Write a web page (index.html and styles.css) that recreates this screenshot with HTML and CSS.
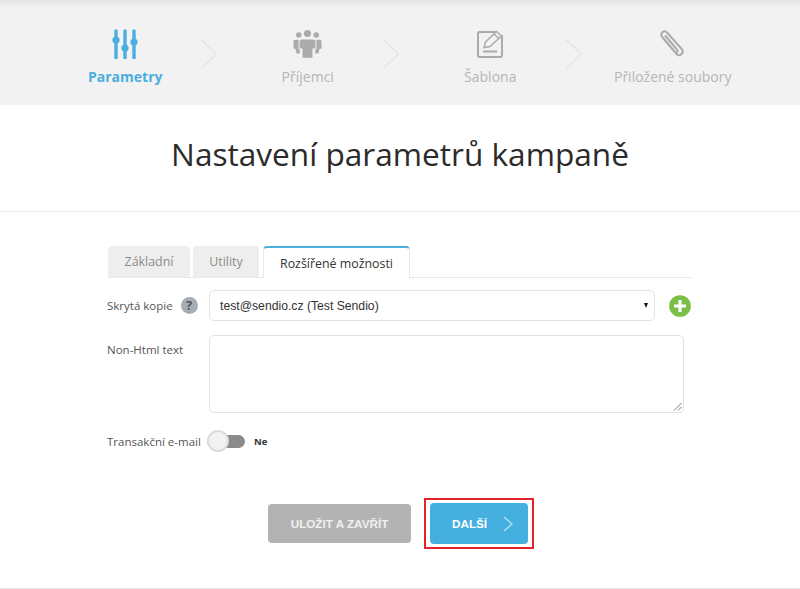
FILE: index.html
```html
<!DOCTYPE html>
<html lang="cs">
<head>
<meta charset="utf-8">
<title>Nastavení parametrů kampaně</title>
<link rel="stylesheet" href="styles.css">
</head>
<body>
<header class="steps">
  <div class="step active">
    <svg class="icon" viewBox="0 0 26 30" width="26" height="30"><g fill="none" stroke="#4aaee0" stroke-width="3.4" stroke-linecap="round"><path d="M4 2v27M13 2v27M22 2v27"/></g><g fill="#4aaee0"><circle cx="4" cy="11" r="3.6"/><circle cx="13" cy="19" r="3.6"/><circle cx="22" cy="13" r="3.6"/></g></svg>
    <span class="step-label">Parametry</span>
  </div>
  <svg class="chev" viewBox="0 0 18 30" width="18" height="30"><path d="M1.500 1l15 14-15 14" fill="none" stroke="#e3e3e3" stroke-width="1.200"/></svg>
  <div class="step">
    <svg class="icon" viewBox="0 -1 29 30" width="29" height="30"><g fill="#ababab"><circle cx="5.800" cy="5" r="2.800"/><circle cx="14.500" cy="3.500" r="3.600"/><circle cx="23.200" cy="5" r="2.800"/><path d="M9 9.500h11a2.500 2.500 0 0 1 2.500 2.500v6.500h-3V27a.8.8 0 0 1-.8.8h-8.400a.8.8 0 0 1-.8-.8v-8.500h-3V12A2.500 2.500 0 0 1 9 9.500z"/><path d="M2 9.800h3.700l-.2 9.200 1 .1.500 4.400H3.500l-1-4.800H.500V11.500A2 2 0 0 1 2 9.800z"/><path d="M27 9.800h-3.700l.2 9.200-1 .1-.5 4.400h3.500l1-4.800h2V11.500A2 2 0 0 0 27 9.800z"/></g></svg>
    <span class="step-label">Příjemci</span>
  </div>
  <svg class="chev" viewBox="0 0 18 30" width="18" height="30"><path d="M1.500 1l15 14-15 14" fill="none" stroke="#e3e3e3" stroke-width="1.200"/></svg>
  <div class="step">
    <svg class="icon" viewBox="0 0 28 30" width="28" height="30"><path d="M20 3H3.500A1.500 1.500 0 0 0 2 4.500v22A1.500 1.500 0 0 0 3.500 28h21a1.500 1.500 0 0 0 1.500-1.500V6" fill="none" stroke="#ababab" stroke-width="2"/><path d="M8 18.500l1.500-5.500L20.500 2.500l5 4.500L14 17.500zM18 5l5 4.500" fill="#f2f2f2" stroke="#ababab" stroke-width="1.500"/><path d="M7 22.500h14" stroke="#ababab" stroke-width="2"/></svg>
    <span class="step-label">Šablona</span>
  </div>
  <svg class="chev" viewBox="0 0 18 30" width="18" height="30"><path d="M1.500 1l15 14-15 14" fill="none" stroke="#e3e3e3" stroke-width="1.200"/></svg>
  <div class="step">
    <svg class="icon" viewBox="2 -1 28 30" width="28" height="30"><path d="M5.500 7.500l14 16.500a3.600 3.600 0 0 0 5.500-4.600L10 2.500a3.200 3.200 0 0 0-5 .1c-1 1.300-.9 2.700 0 4l13 15.400a1.500 1.500 0 0 0 2.400-1.900L8.500 6" fill="none" stroke="#ababab" stroke-width="2" stroke-linecap="round"/></svg>
    <span class="step-label">Přiložené soubory</span>
  </div>
</header>

<main class="page">
  <h1 class="title">Nastavení parametrů kampaně</h1>

  <section class="panel">
    <nav class="tabs">
      <span class="tab tab-basic">Základní</span>
      <span class="tab tab-util">Utility</span>
      <span class="tab tab-current">Rozšířené možnosti</span>
    </nav>

    <div class="row row-select">
      <span class="field-label">Skrytá kopie <span class="help">?</span></span>
      <div class="select">
        <span>test@sendio.cz (Test Sendio)</span>
        <span class="caret"></span>
      </div>
      <svg class="plus" viewBox="0 0 24 24" width="22" height="22"><circle cx="12" cy="12" r="11.800" fill="#7abf47"/><path d="M12 5.500v13M5.500 12h13" stroke="#fff" stroke-width="3.400"/></svg>
    </div>

    <div class="row row-text">
      <span class="field-label">Non-Html text</span>
      <div class="textarea">
        <svg class="grip" viewBox="0 0 9 9" width="9" height="9"><path d="M1 8.500L8.500 1M5 8.500L8.500 5" stroke="#777" stroke-width="1"/></svg>
      </div>
    </div>

    <div class="row row-toggle">
      <span class="field-label">Transakční e-mail</span>
      <span class="toggle"><span class="knob"></span></span>
      <span class="toggle-value">Ne</span>
    </div>

    <div class="actions">
      <span class="btn btn-save">ULOŽIT A ZAVŘÍT</span>
      <span class="highlight">
        <span class="btn btn-next">DALŠÍ
          <svg viewBox="0 0 10 16" width="10" height="16"><path d="M1 1l8 7-8 7" fill="none" stroke="#bfe3f5" stroke-width="1.300"/></svg>
        </span>
      </span>
    </div>
  </section>
</main>
</body>
</html>
```

FILE: styles.css
```css
* { box-sizing: border-box; }

html, body {
  margin: 0;
  height: 589px;
  overflow: hidden;
  background: #fff;
  font-family: "Open Sans", "Liberation Sans", sans-serif;
}

.steps {
  height: 105px;
  display: flex;
  align-items: flex-start;
  justify-content: center;
  padding: 29px 2px 0 0;
  background: linear-gradient(#e4e4e4 0, #f2f2f2 9px);
}

.step {
  width: 164.500px;
  display: flex;
  flex-direction: column;
  align-items: center;
  color: #b5b5b5;
  font-size: 14px;
  line-height: 20px;
}

.step .icon { height: 30px; margin-bottom: 8px; }

.step.active { color: #4aaee0; font-weight: 700; }

.step-label { white-space: nowrap; }

.chev { flex: none; margin: 10px 8px 0 -8px; }

.page { display: flex; flex-direction: column; }

.title {
  margin: 0;
  height: 107px;
  padding-top: 27px;
  text-align: center;
  font-size: 31.600px;
  line-height: 44px;
  font-weight: 400;
  color: #2b2b2b;
  border-bottom: 1px solid #ececec;
}

.panel {
  height: 377px;
  padding: 34px 108px 0 107px;
  border-bottom: 1px solid #e6e6e6;
}

.tabs {
  display: flex;
  height: 32px;
  gap: 3px;
  border-bottom: 1px solid #e8e8e8;
  font-size: 12.400px;
}

.tab {
  display: flex;
  align-items: center;
  justify-content: center;
  height: 31px;
  border-radius: 4px 4px 0 0;
  background: #eee;
  color: #8c8c8c;
}

.tab-basic { width: 82px; margin-left: 1px; }
.tab-util { width: 66px; }

.tab-current {
  width: 147px;
  margin-left: 1px;
  height: 32px;
  background: #fff;
  color: #333;
  border: 1px solid #e8e8e8;
  border-top: 2px solid #4aaee0;
  border-bottom: 0;
}

.row { display: flex; }

.field-label {
  width: 102px;
  flex: none;
  font-size: 11.500px;
  color: #555;
  white-space: nowrap;
}

.row-select { margin-top: 12px; align-items: center; }

.row-select .field-label { display: flex; align-items: center; gap: 8px; }

.help {
  width: 17px;
  height: 17px;
  border-radius: 50%;
  background: #a6adb3;
  color: #555;
  font-size: 13px;
  font-weight: 700;
  text-align: center;
  line-height: 17px;
}

.select {
  width: 446px;
  height: 31px;
  display: flex;
  align-items: center;
  justify-content: space-between;
  padding: 0 6px 0 10px;
  border: 1px solid #e2e2e2;
  border-radius: 5px;
  background: #fff;
  font-family: "Liberation Sans", sans-serif;
  font-size: 12.200px;
  color: #333;
}

.caret {
  width: 0;
  height: 0;
  border: 2.500px solid transparent;
  border-top: 5px solid #111;
  border-bottom: 0;
}

.plus { margin-left: 14px; }

.row-text { margin-top: 14px; }

.row-text .field-label { padding-top: 7px; }

.textarea {
  position: relative;
  width: 475px;
  height: 78px;
  border: 1px solid #e2e2e2;
  border-radius: 5px;
}

.grip { position: absolute; right: 1px; bottom: 1px; }

.row-toggle { margin-top: 17px; align-items: center; height: 22px; }

.row-toggle .field-label { width: 100px; }

.toggle {
  position: relative;
  width: 38px;
  height: 13px;
  border-radius: 7px;
  background: #8a8a8a;
}

.knob {
  position: absolute;
  left: 0;
  top: -5px;
  width: 22px;
  height: 22px;
  border-radius: 50%;
  background: #f2f2f2;
  border: 2px solid #dcdcdc;
}

.toggle-value {
  margin-left: 9px;
  font-size: 9.500px;
  font-weight: 700;
  color: #333;
}

.actions {
  display: flex;
  align-items: center;
  justify-content: center;
  gap: 13px;
  margin-top: 46px;
  padding-left: 3px;
  font-family: "Liberation Sans", sans-serif;
  font-size: 11.700px;
  font-weight: 700;
}

.btn {
  display: flex;
  align-items: center;
  justify-content: center;
  border-radius: 4px;
  color: #fff;
}

.btn-save { width: 143px; height: 39px; background: #b3b3b3; color: #f0f0f0; }

.highlight { display: block; border: 2px solid #e4222b; padding: 3px 4px; }

.btn-next {
  width: 98px;
  height: 41px;
  justify-content: flex-start;
  gap: 16px;
  padding-left: 22px;
  background: #45b0e0;
}
```
